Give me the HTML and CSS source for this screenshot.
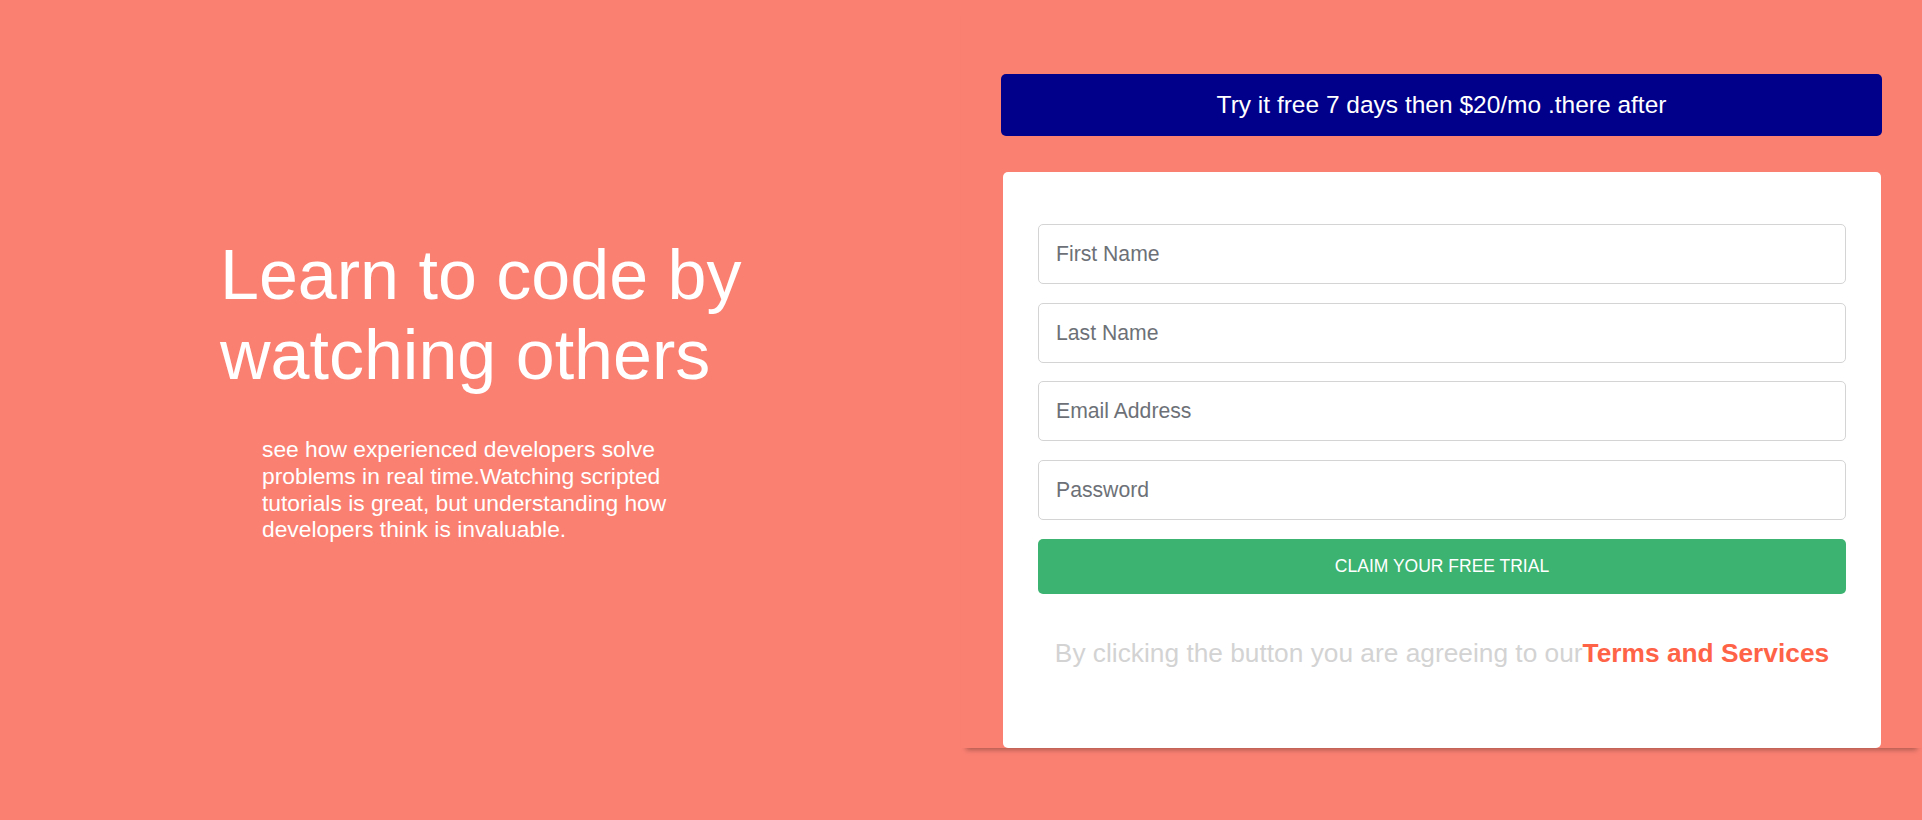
FILE: index.html
```html
<!DOCTYPE html>
<html lang="en">
<head>
<meta charset="utf-8">
<title>Learn to code</title>
<link rel="stylesheet" href="styles.css">
</head>
<body>
<main class="page">
  <section class="intro">
    <h1 class="intro-title">Learn to code by watching others</h1>
    <p class="intro-text">see how experienced developers solve problems in real time.Watching scripted tutorials is great, but understanding how developers think is invaluable.</p>
  </section>
  <section class="signup">
    <div class="offer">Try it free 7 days then $20/mo .there after</div>
    <form class="card">
      <input class="field" type="text" placeholder="First Name">
      <input class="field" type="text" placeholder="Last Name">
      <input class="field" type="email" placeholder="Email Address">
      <input class="field" type="password" placeholder="Password">
      <button class="claim" type="button">CLAIM YOUR FREE TRIAL</button>
      <p class="terms">By clicking the button you are agreeing to our<a class="terms-link" href="#">Terms and Services</a></p>
    </form>
  </section>
</main>
</body>
</html>
```

FILE: styles.css
```css
* {
  box-sizing: border-box;
}

html, body {
  margin: 0;
  padding: 0;
}

body {
  background: #fa8072;
  font-family: "Liberation Sans", Arial, sans-serif;
  color: #ffffff;
  height: 820px;
  overflow: hidden;
}

.page {
  display: flex;
  width: 1922px;
}

.intro {
  width: 961px;
  flex: none;
  padding: 235px 0 0 220px;
}

.intro-title {
  margin: 0;
  width: 560px;
  font-size: 70px;
  font-weight: normal;
  line-height: normal;
}

.intro-text {
  margin: 41px 0 0 42px;
  width: 440px;
  font-size: 22.8px;
  line-height: 26.8px;
}

.signup {
  width: 961px;
  flex: none;
  padding: 74px 40px 0;
  box-shadow: 0 7px 5px -5px rgba(0, 0, 0, 0.3);
}

.offer {
  height: 62px;
  display: flex;
  align-items: center;
  justify-content: center;
  background: #00008b;
  border-radius: 5px;
  font-size: 24.5px;
  color: #ffffff;
}

.card {
  margin: 36px 1px 0 2px;
  height: 576px;
  background: #ffffff;
  border-radius: 5px;
  padding: 52px 35px 0;
  display: flex;
  flex-direction: column;
}

.field {
  display: block;
  width: 100%;
  height: 60px;
  margin: 0 0 18.67px;
  padding: 0 17px;
  border: 1px solid #d4d4d4;
  border-radius: 5px;
  font-family: "Liberation Sans", Arial, sans-serif;
  font-size: 21.2px;
  color: #495057;
  background: #ffffff;
}

.field::placeholder {
  color: #6d7177;
  opacity: 1;
}

.claim {
  display: block;
  width: 100%;
  height: 55px;
  margin: 0;
  border: none;
  border-radius: 5px;
  background: #3cb371;
  color: #ffffff;
  font-family: "Liberation Sans", Arial, sans-serif;
  font-size: 17.5px;
  cursor: pointer;
}

.terms {
  margin: 44px 0 0;
  text-align: center;
  font-size: 26.3px;
  line-height: normal;
  color: #d3d3d3;
}

.terms-link {
  color: #ff6347;
  font-weight: bold;
  text-decoration: none;
}
```
